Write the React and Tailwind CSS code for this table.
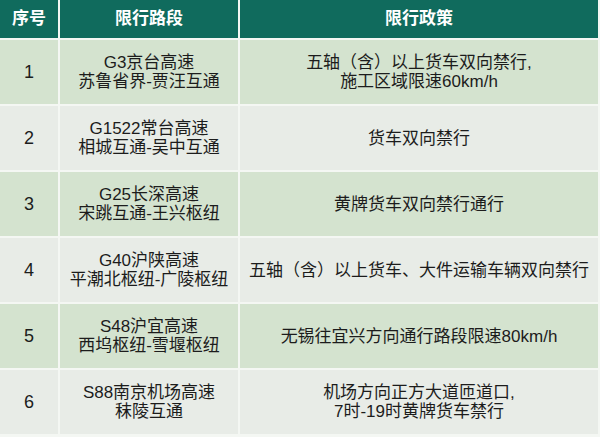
import React from "react";

const rows = [
    { no: "1", road: ["G3京台高速", "苏鲁省界-贾汪互通"], policy: ["五轴（含）以上货车双向禁行,", "施工区域限速60km/h"] },
    { no: "2", road: ["G1522常台高速", "相城互通-吴中互通"], policy: ["货车双向禁行"] },
    { no: "3", road: ["G25长深高速", "宋跳互通-王兴枢纽"], policy: ["黄牌货车双向禁行通行"] },
    { no: "4", road: ["G40沪陕高速", "平潮北枢纽-广陵枢纽"], policy: ["五轴（含）以上货车、大件运输车辆双向禁行"] },
    { no: "5", road: ["S48沪宜高速", "西坞枢纽-雪堰枢纽"], policy: ["无锡往宜兴方向通行路段限速80km/h"] },
    { no: "6", road: ["S88南京机场高速", "秣陵互通"], policy: ["机场方向正方大道匝道口,", "7时-19时黄牌货车禁行"] },
];

const Cell = ({ lines, bg, size = "text-[17px]" }) => (
    <div className={`${bg} ${size} flex flex-col items-center justify-center text-center leading-[19px] text-[#1c1c1c]`}>
        {lines.map((l) => (
            <span key={l}>{l}</span>
        ))}
    </div>
);

const App = () => {
    return (
        <div
            className="w-[600px] h-[437px] bg-[#f4f7f3] overflow-hidden"
            style={{ fontFamily: '"Liberation Sans", "Noto Sans CJK SC", sans-serif' }}
        >
            <div className="grid grid-cols-[58px_178px_358px] grid-rows-[38px_repeat(6,64px)] gap-[2px] w-[598px]">
                <div className="bg-[#106b5d] text-white font-bold text-[17px] flex items-center justify-center">序号</div>
                <div className="bg-[#106b5d] text-white font-bold text-[17px] flex items-center justify-center">限行路段</div>
                <div className="bg-[#106b5d] text-white font-bold text-[17px] flex items-center justify-center">限行政策</div>
                {rows.map((r, i) => {
                    const bg = i % 2 === 0 ? "bg-[#d4e3cf]" : "bg-[#e8ece7]";
                    return (
                        <React.Fragment key={r.no}>
                            <Cell lines={[r.no]} bg={bg} size="text-[18px]" />
                            <Cell lines={r.road} bg={bg} />
                            <Cell lines={r.policy} bg={bg} />
                        </React.Fragment>
                    );
                })}
            </div>
        </div>
    );
};

export default App;
